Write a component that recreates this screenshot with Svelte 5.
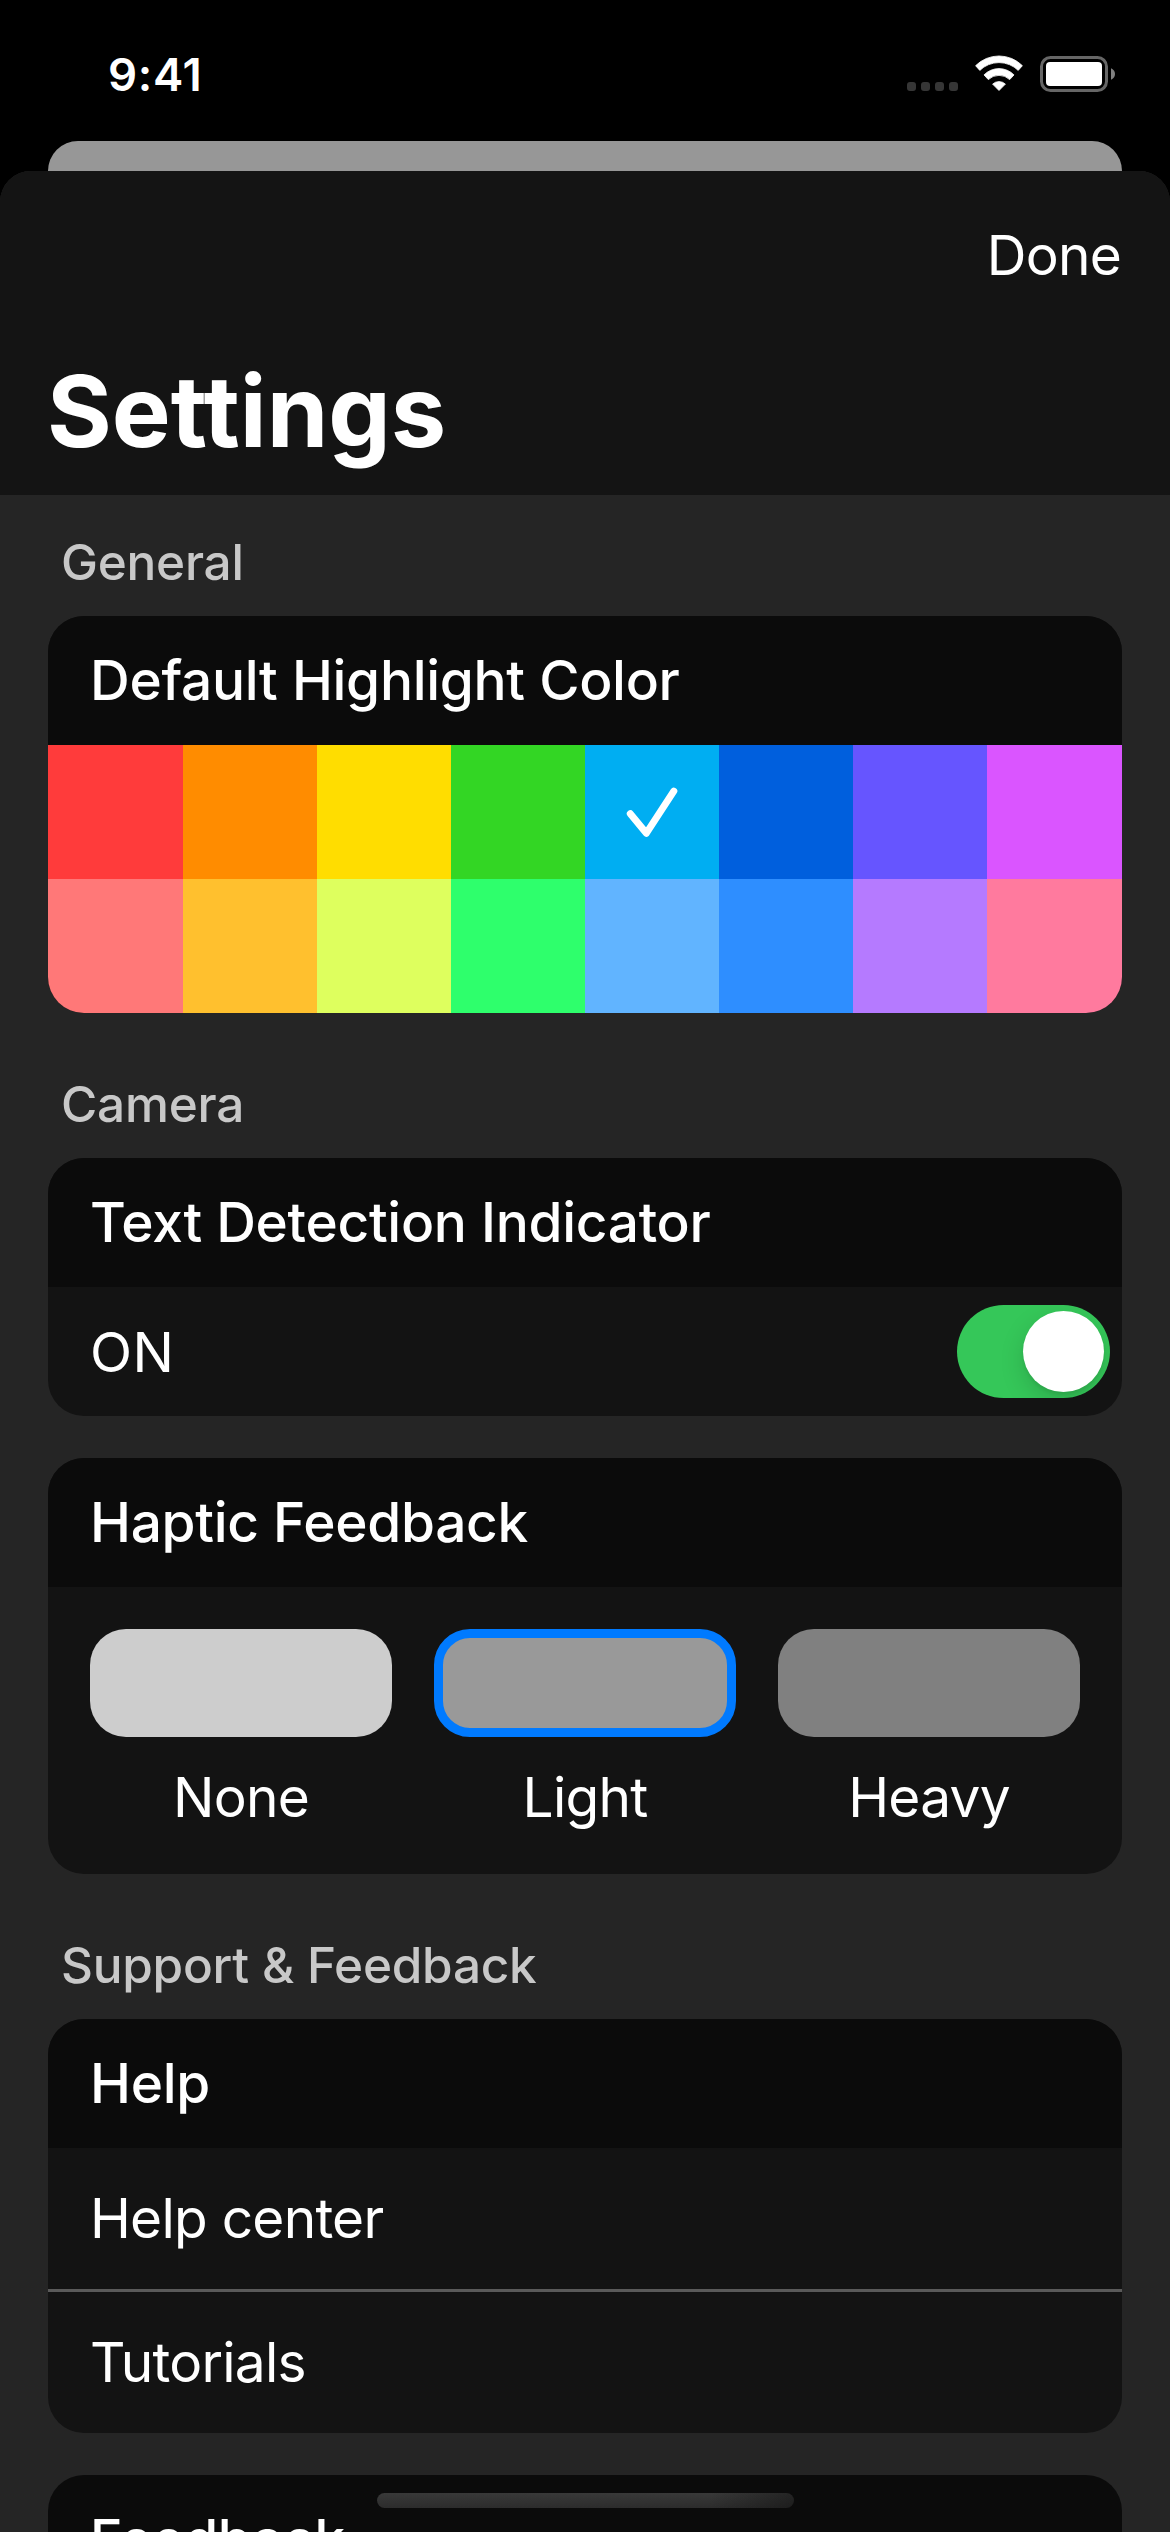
<script>
  const colors = [
    '#ff3b3b', '#ff8c00', '#ffdd00', '#33d624', '#00aef2', '#005fdd', '#6655ff', '#da55ff',
    '#ff7878', '#ffc02e', '#deff5e', '#2eff6c', '#61b4ff', '#2e8eff', '#b57aff', '#ff7a9e'
  ];
  const haptics = [
    { label: 'None', fill: '#cdcdcd' },
    { label: 'Light', fill: '#999999' },
    { label: 'Heavy', fill: '#808080' }
  ];
  const helpLinks = ['Help center', 'Tutorials'];

  let selectedColor = $state(4);
  let selectedHaptic = $state('Light');
  let detection = $state(true);
</script>

<div class="screen">
  <header class="status">
    <span class="time">9:41</span>
    <div class="indicators">
      <div class="dots"><i></i><i></i><i></i><i></i></div>
      <svg class="wifi" viewBox="0 0 48 36" width="48" height="36" fill="#fff" stroke="#fff" stroke-width="0.8" stroke-linejoin="round">
        <path d="M0.6 10.7A33 33 0 0 1 47.4 10.7L43.2 15.4A27.5 27.5 0 0 0 4.8 15.4Z" />
        <path d="M9 19.9A21 21 0 0 1 39 19.9L34.7 24.6A15.6 15.6 0 0 0 13.3 24.6Z" />
        <path d="M17.6 29.1A9.4 9.4 0 0 1 30.4 29.1L24 35.5Z" />
      </svg>
      <svg class="battery" viewBox="0 0 76 36" width="76" height="36">
        <rect x="1.5" y="1.5" width="65" height="33" rx="9" fill="none" stroke="#666" stroke-width="3" />
        <rect x="6" y="6" width="56" height="24" rx="4" fill="#fff" />
        <path d="M71 12.3C73.4 13.2 75 15.3 75 18S73.4 22.8 71 23.7Z" fill="#808080" />
      </svg>
    </div>
  </header>

  <div class="backdrop"></div>

  <main class="sheet">
    <div class="title-bar">
      <button class="done">Done</button>
      <h1>Settings</h1>
    </div>

    <div class="content">
      <h2>General</h2>
      <section class="card">
        <h3>Default Highlight Color</h3>
        <div class="palette">
          {#each colors as color, i}
            <button class="swatch" style:background={color} aria-label={color} onclick={() => (selectedColor = i)}>
              {#if i === selectedColor}
                <svg viewBox="0 0 134 134" width="134" height="134">
                  <path d="M45.3 68.8L61.4 88.2L88.8 46.2" fill="none" stroke="#fff" stroke-width="7" stroke-linecap="round" stroke-linejoin="round" />
                </svg>
              {/if}
            </button>
          {/each}
        </div>
      </section>

      <h2>Camera</h2>
      <section class="card">
        <h3>Text Detection Indicator</h3>
        <div class="toggle-row">
          <span>{detection ? 'ON' : 'OFF'}</span>
          <button class="switch" class:on={detection} aria-label="Text Detection Indicator" onclick={() => (detection = !detection)}>
            <i></i>
          </button>
        </div>
      </section>

      <section class="card spaced">
        <h3>Haptic Feedback</h3>
        <div class="haptics">
          {#each haptics as h}
            <button class="haptic" onclick={() => (selectedHaptic = h.label)}>
              <i class="pill" class:selected={h.label === selectedHaptic} style:background-color={h.fill}></i>
              <span>{h.label}</span>
            </button>
          {/each}
        </div>
      </section>

      <h2>Support &amp; Feedback</h2>
      <section class="card">
        <h3>Help</h3>
        {#each helpLinks as link}
          <div class="link">{link}</div>
        {/each}
      </section>

      <section class="card spaced">
        <h3>Feedback</h3>
      </section>
    </div>
  </main>

  <div class="home"></div>
</div>

<style>
  :global(body) {
    background: #000;
  }
  .screen {
    position: relative;
    width: 1170px;
    height: 2532px;
    overflow: hidden;
    display: flex;
    flex-direction: column;
    background: #000;
    color: #fff;
    font-family: Inter, 'Liberation Sans', sans-serif;
    font-size: 55px;
    letter-spacing: -0.75px;
  }
  button {
    display: block;
    margin: 0;
    padding: 0;
    border: 0;
    background: none;
    color: inherit;
    font: inherit;
    letter-spacing: inherit;
  }
  h1, h2, h3 {
    margin: 0;
  }

  .status {
    display: flex;
    justify-content: space-between;
    height: 141px;
    flex: none;
    box-sizing: border-box;
    padding: 55px 54px 0 108px;
  }
  .time {
    height: 40px;
    font-size: 45.5px;
    font-weight: 600;
    line-height: 40px;
    letter-spacing: 0.7px;
  }
  .indicators {
    display: flex;
    align-items: flex-start;
  }
  .dots {
    display: flex;
    gap: 5px;
    padding-top: 27px;
  }
  .dots i {
    width: 9px;
    height: 9px;
    border-radius: 3px;
    background: #363636;
  }
  .wifi {
    margin-left: 17px;
  }
  .battery {
    margin: 1px 0 0 17px;
  }

  .backdrop {
    flex: none;
    height: 30px;
    margin: 0 48px;
    border-radius: 30px 30px 0 0;
    background: #979797;
  }
  .sheet {
    flex: 1;
    min-height: 0;
    overflow: hidden;
    border-radius: 31px 31px 0 0;
    background: #252525;
  }
  .title-bar {
    height: 324px;
    box-sizing: border-box;
    padding: 49px 49px 0 47px;
    background: #141414;
  }
  .done {
    margin-left: auto;
    line-height: 70px;
  }
  h1 {
    margin-top: 61px;
    font-size: 99px;
    font-weight: 700;
    line-height: 120px;
    letter-spacing: 0;
  }

  .content {
    padding: 0 48px;
  }
  h2 {
    padding: 61px 13px 24px;
    color: #c8c8c8;
    font-size: 49.5px;
    font-weight: 500;
    line-height: 60px;
    letter-spacing: -0.25px;
  }
  h2:first-child {
    padding-top: 37px;
  }
  .card {
    overflow: hidden;
    border-radius: 36px;
    background: #131313;
  }
  .spaced {
    margin-top: 42px;
  }
  h3 {
    height: 129px;
    padding: 0 42px;
    background: #0b0b0b;
    font-size: 55px;
    font-weight: 500;
    line-height: 129px;
    letter-spacing: -0.3px;
  }

  .palette {
    display: grid;
    grid-template-columns: 135px repeat(6, 134px) 135px;
    grid-auto-rows: 134px;
  }
  .swatch svg {
    display: block;
  }

  .toggle-row {
    display: flex;
    align-items: center;
    justify-content: space-between;
    height: 129px;
    padding: 0 12px 0 42px;
    letter-spacing: 0.5px;
  }
  .switch {
    display: flex;
    width: 153px;
    height: 93px;
    box-sizing: border-box;
    padding: 6px;
    overflow: hidden;
    border-radius: 47px;
    background: #3a3a3c;
  }
  .switch i {
    width: 81px;
    height: 81px;
    border-radius: 50%;
    background: #fff;
    box-shadow: 0 9px 24px rgba(0, 0, 0, 0.15), 0 3px 3px rgba(0, 0, 0, 0.06);
  }
  .switch.on {
    justify-content: flex-end;
    background: #35c759;
  }

  .haptics {
    display: grid;
    grid-template-columns: repeat(3, 302px);
    column-gap: 42px;
    height: 287px;
    box-sizing: border-box;
    padding: 42px 42px 0;
  }
  .haptic {
    display: flex;
    flex-direction: column;
    gap: 25px;
    text-align: center;
  }
  .haptic span {
    line-height: 70px;
  }
  .pill {
    display: block;
    align-self: stretch;
    height: 108px;
    box-sizing: border-box;
    border-radius: 36px;
  }
  .pill.selected {
    border: 9px solid #007aff;
  }

  .link {
    height: 141px;
    padding: 0 42px;
    line-height: 141px;
  }
  .link + .link {
    border-top: 3px solid #5a5a5a;
  }

  .home {
    position: absolute;
    left: 377px;
    bottom: 24px;
    width: 417px;
    height: 15px;
    border-radius: 8px;
    background: linear-gradient(90deg, transparent 80%, rgba(11, 11, 11, 0.45) 100%), linear-gradient(#393939, #2c2c2c);
  }
</style>
